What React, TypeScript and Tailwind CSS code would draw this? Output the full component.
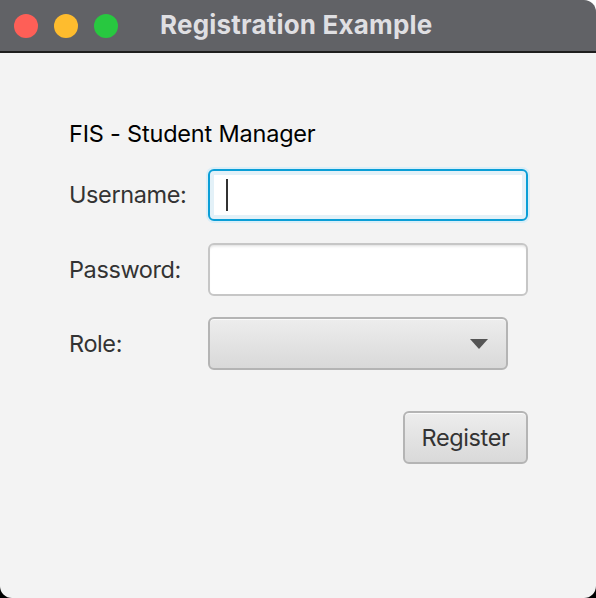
import React from 'react';

const App: React.FC = () => {
  return (
    <div className="w-[596px] h-[598px] bg-[linear-gradient(#ffffff_50%,#000000_50%)] font-['Inter','Liberation_Sans',sans-serif]">
      <div className="w-full h-full rounded-tr-[12px] rounded-b-[12px] overflow-hidden flex flex-col bg-[#f3f3f3]">
        {/* Title bar */}
        <div className="h-[53px] shrink-0 bg-[#616266] border-b-2 border-[#1e1e1e] flex items-center relative">
          <div className="flex gap-[16px] pl-[14px]">
            <span className="w-[24px] h-[24px] rounded-full bg-[#fe5f57]" />
            <span className="w-[24px] h-[24px] rounded-full bg-[#febc2e]" />
            <span className="w-[24px] h-[24px] rounded-full bg-[#28c840]" />
          </div>
          <span className="absolute left-[160px] top-[5px] text-[26px] font-bold text-[#dfdfe2] tracking-[0.2px]">
            Registration Example
          </span>
        </div>

        {/* Form */}
        <div className="flex flex-col pl-[69px] pt-[67px]">
          <div className="text-[23.5px] leading-[28px] text-black tracking-[-0.2px]">FIS - Student Manager</div>

          <div className="flex items-center mt-[21px]">
            <span className="w-[139px] text-[23.5px] text-[#333] tracking-[-0.4px]">Username:</span>
            <div className="w-[320px] h-[52px] rounded-[6px] border-2 border-[#0a9ed6] bg-white shadow-[0_0_0_2px_#d9eef8,inset_0_0_0_4px_#e3f1f8] flex items-center pl-[16px]">
              <span className="w-[2px] h-[32px] bg-[#333]" />
            </div>
          </div>

          <div className="flex items-center mt-[22px]">
            <span className="w-[139px] text-[23.5px] text-[#333] tracking-[-0.4px]">Password:</span>
            <div className="w-[320px] h-[53px] rounded-[6px] border-2 border-[#c6c6c6] bg-white shadow-[inset_0_3px_3px_-2px_#dcdcdc]" />
          </div>

          <div className="flex items-center mt-[21px]">
            <span className="w-[139px] text-[23.5px] text-[#333] tracking-[-0.4px]">Role:</span>
            <div className="w-[300px] h-[53px] rounded-[6px] border-2 border-[#b4b4b4] bg-[linear-gradient(#ededed,#d9d9d9)] shadow-[inset_0_1px_0_#fafafa] flex items-center justify-end pr-[18px]">
              <svg width="18" height="10" viewBox="0 0 18 10">
                <path d="M0 0 H18 L9 10 Z" fill="#555" />
              </svg>
            </div>
          </div>

          <div className="flex justify-start mt-[41px] pl-[334px]">
            <button className="w-[125px] h-[53px] rounded-[6px] border-2 border-[#b4b4b4] bg-[linear-gradient(#ededed,#d9d9d9)] shadow-[inset_0_1px_0_#fafafa] text-[23.5px] text-[#333] tracking-[-0.4px]">
              Register
            </button>
          </div>
        </div>
      </div>
    </div>
  );
};

export default App;
